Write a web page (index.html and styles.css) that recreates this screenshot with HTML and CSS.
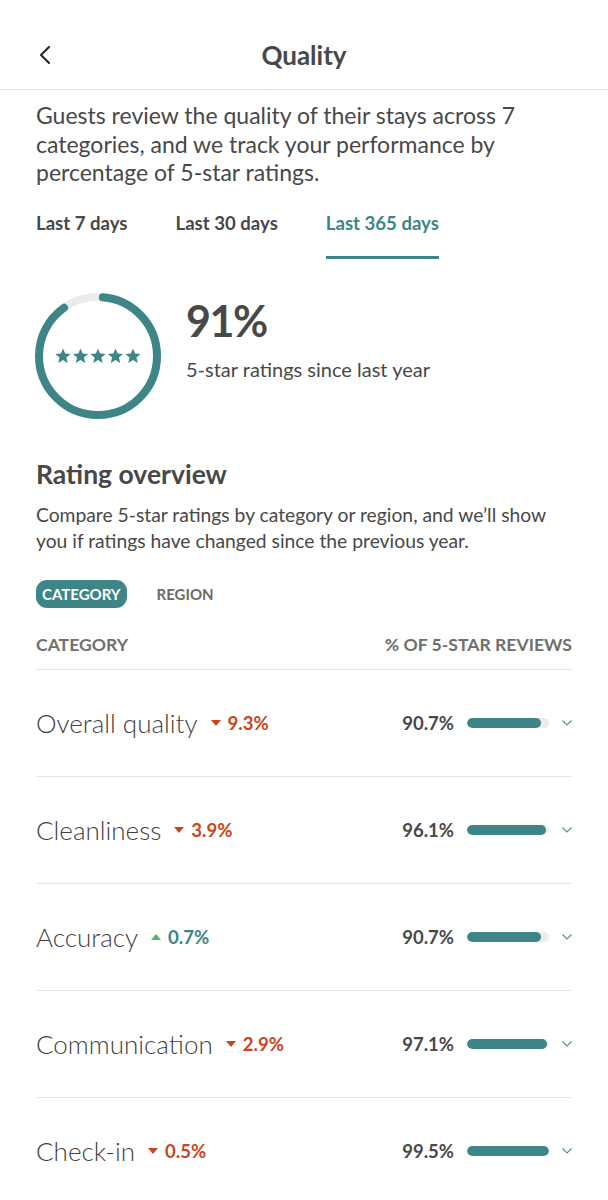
FILE: index.html
```html
<!DOCTYPE html>
<html lang="en">
<head>
<meta charset="utf-8">
<title>Quality</title>
<link rel="stylesheet" href="styles.css">
</head>
<body>
<header class="topbar">
  <svg class="back" width="14" height="20" viewBox="0 0 14 20"><path d="M11 2 L3 10 L11 18" fill="none" stroke="#222" stroke-width="2" stroke-linecap="round" stroke-linejoin="round"/></svg>
  <h1 class="title">Quality</h1>
</header>
<main class="content">
  <p class="intro">Guests review the quality of their stays across 7 categories, and we track your performance by percentage of 5-star ratings.</p>
  <nav class="tabs">
    <span class="tab">Last 7 days</span>
    <span class="tab">Last 30 days</span>
    <span class="tab active">Last 365 days</span>
  </nav>
  <section class="summary">
    <div class="ring">
      <svg width="126" height="126" viewBox="0 0 126 126">
        <circle cx="63" cy="63" r="59" fill="none" stroke="#ebebeb" stroke-width="8"/>
        <circle cx="63" cy="63" r="59" fill="none" stroke="#3d8587" stroke-width="8" stroke-linecap="round" stroke-dasharray="329 400" stroke-dashoffset="-5" transform="rotate(-90 63 63)"/>
      </svg>
      <div class="stars">
        <svg width="86" height="16" viewBox="0 0 86 16">
          <defs><polygon id="st" points="8,0.5 10.1,5.6 15.6,6 11.4,9.6 12.7,15 8,12.1 3.3,15 4.6,9.6 0.4,6 5.9,5.6"/></defs>
          <use href="#st" x="0" fill="#3d8587"/>
          <use href="#st" x="17.5" fill="#3d8587"/>
          <use href="#st" x="35" fill="#3d8587"/>
          <use href="#st" x="52.5" fill="#3d8587"/>
          <use href="#st" x="70" fill="#3d8587"/>
        </svg>
      </div>
    </div>
    <div class="summary-text">
      <div class="big">91%</div>
      <div class="sub">5-star ratings since last year</div>
    </div>
  </section>
  <h2 class="h2">Rating overview</h2>
  <p class="desc">Compare 5-star ratings by category or region, and we’ll show you if ratings have changed since the previous year.</p>
  <div class="pills">
    <span class="pill active">CATEGORY</span>
    <span class="pill">REGION</span>
  </div>
  <div class="thead">
    <span>CATEGORY</span>
    <span>% OF 5-STAR REVIEWS</span>
  </div>
  <div class="row">
    <div class="left"><span class="label">Overall quality</span><span class="chg down"><i class="tri"></i>9.3%</span></div>
    <div class="right"><span class="pct">90.7%</span><span class="bar"><span class="fill" style="width:90.7%"></span></span><svg class="chev" width="10" height="6" viewBox="0 0 10 6"><path d="M0.5 0.5 L5 5 L9.5 0.5" fill="none" stroke="#5a8c8f" stroke-width="1.1"/></svg></div>
  </div>
  <div class="row">
    <div class="left"><span class="label">Cleanliness</span><span class="chg down"><i class="tri"></i>3.9%</span></div>
    <div class="right"><span class="pct">96.1%</span><span class="bar"><span class="fill" style="width:96.1%"></span></span><svg class="chev" width="10" height="6" viewBox="0 0 10 6"><path d="M0.5 0.5 L5 5 L9.5 0.5" fill="none" stroke="#5a8c8f" stroke-width="1.1"/></svg></div>
  </div>
  <div class="row">
    <div class="left"><span class="label">Accuracy</span><span class="chg up"><i class="tri"></i>0.7%</span></div>
    <div class="right"><span class="pct">90.7%</span><span class="bar"><span class="fill" style="width:90.7%"></span></span><svg class="chev" width="10" height="6" viewBox="0 0 10 6"><path d="M0.5 0.5 L5 5 L9.5 0.5" fill="none" stroke="#5a8c8f" stroke-width="1.1"/></svg></div>
  </div>
  <div class="row">
    <div class="left"><span class="label">Communication</span><span class="chg down"><i class="tri"></i>2.9%</span></div>
    <div class="right"><span class="pct">97.1%</span><span class="bar"><span class="fill" style="width:97.1%"></span></span><svg class="chev" width="10" height="6" viewBox="0 0 10 6"><path d="M0.5 0.5 L5 5 L9.5 0.5" fill="none" stroke="#5a8c8f" stroke-width="1.1"/></svg></div>
  </div>
  <div class="row">
    <div class="left"><span class="label">Check-in</span><span class="chg down"><i class="tri"></i>0.5%</span></div>
    <div class="right"><span class="pct">99.5%</span><span class="bar"><span class="fill" style="width:99.5%"></span></span><svg class="chev" width="10" height="6" viewBox="0 0 10 6"><path d="M0.5 0.5 L5 5 L9.5 0.5" fill="none" stroke="#5a8c8f" stroke-width="1.1"/></svg></div>
  </div>
</main>
</body>
</html>
```
FILE: styles.css
```css
* { box-sizing: border-box; }
html, body { margin: 0; padding: 0; background: #fff; }
body {
  font-family: Lato, "Liberation Sans", sans-serif;
  color: #484848;
  width: 608px;
  overflow: hidden;
}
.topbar {
  height: 90px;
  padding-top: 20px;
  border-bottom: 1px solid #dedede;
  display: flex;
  align-items: center;
  justify-content: center;
  position: relative;
}
.back { position: absolute; left: 38px; top: 45px; }
.title { margin: 0; font-size: 26px; font-weight: 700; color: #484848; }
.content { padding: 0 36px; }
.intro { margin: 11px 0 0; font-size: 23px; line-height: 28.5px; }
.tabs { display: flex; gap: 48px; }
.tab {
  padding: 24px 0 21px;
  font-size: 18.6px;
  line-height: 24px;
  font-weight: 700;
  border-bottom: 3px solid transparent;
}
.tab.active { color: #3d8587; border-bottom-color: #3d8587; }
.summary { display: flex; align-items: flex-start; gap: 25px; margin-top: 34px; margin-left: -1px; }
.ring { position: relative; width: 126px; height: 126px; flex: none; }
.ring svg { display: block; }
.stars {
  position: absolute; inset: 0;
  display: flex; align-items: center; justify-content: center;
}
.summary-text { padding-top: 3px; }
.big { font-size: 43px; line-height: 50px; font-weight: 700; letter-spacing: -1.5px; }
.sub { margin-top: 11px; font-size: 20px; line-height: 24px; }
.h2 { margin: 39px 0 0; font-size: 26.5px; line-height: 32px; font-weight: 700; }
.desc { margin: 12px 0 0; font-size: 19.3px; line-height: 26px; }
.pills { display: flex; gap: 30px; margin-top: 26px; align-items: center; }
.pill {
  height: 28px; line-height: 28px; padding: 0 6px;
  font-size: 15px; font-weight: 700; color: #6a6a6a; border-radius: 11px;
}
.pill.active { background: #3d8587; color: #fff; }
.pill + .pill { padding-left: 0; }
.thead {
  display: flex; justify-content: space-between;
  margin-top: 26px; padding-bottom: 13px;
  border-bottom: 1px solid #e6e6e6;
  font-size: 17.6px; line-height: 22px; font-weight: 700; color: #6f6f6f;
}
.row {
  height: 107px;
  display: flex; align-items: center; justify-content: space-between;
  border-bottom: 1px solid #e6e6e6;
}
.left { display: flex; align-items: center; gap: 13px; }
.label { font-size: 26px; font-weight: 300; color: #3f3f3f; }
.chg { display: flex; align-items: center; gap: 7px; font-size: 18.6px; font-weight: 700; }
.chg.down { color: #c8451d; }
.chg.up { color: #3d8587; }
.tri { width: 0; height: 0; border-left: 5px solid transparent; border-right: 5px solid transparent; }
.down .tri { border-top: 6px solid #c8451d; }
.up .tri { border-bottom: 6px solid #5fae70; }
.right { display: flex; align-items: center; gap: 13px; }
.pct { font-size: 18.5px; font-weight: 700; color: #484848; }
.bar { width: 82px; height: 10px; border-radius: 5px; background: #ececec; display: block; overflow: hidden; }
.fill { display: block; height: 100%; background: #3d8587; border-radius: 5px; }
.chev { display: block; }
```
